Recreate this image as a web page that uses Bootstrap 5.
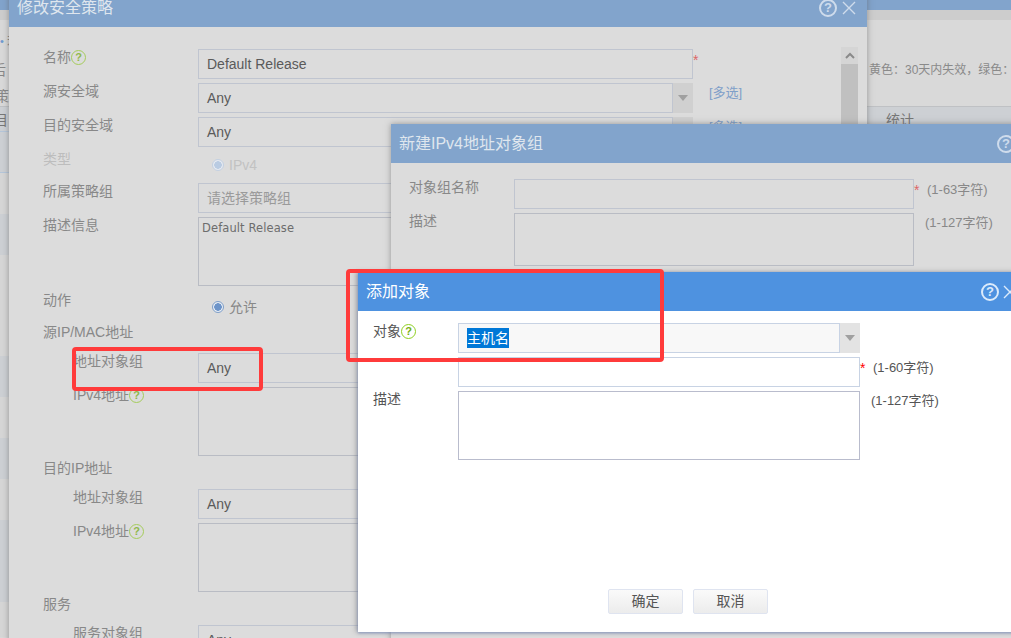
<!DOCTYPE html>
<html lang="zh-CN">
<head>
<meta charset="utf-8">
<title>添加对象</title>
<link href="https://cdn.jsdelivr.net/npm/bootstrap@5.3.0/dist/css/bootstrap.min.css" rel="stylesheet">
<style>
html,body{height:638px;overflow:hidden;margin:0;background:#d9d9d9}
body{font-family:"Liberation Sans","Noto Sans CJK SC",sans-serif;font-size:14px;line-height:16px;color:#888}
.desk{position:relative;width:1011px;height:638px;overflow:hidden}
/* page behind the dialogs */
.back-top{height:10px;background:#82a4cc}
.back-strip{height:10px;background:#cdcdcd}
.back-tools{height:86px;background:#d9d9d9;padding-top:13px}
.back-line{display:flex;height:16px;white-space:nowrap}
.back-line.l2{margin-top:13px}
.back-line.l3{margin-top:10px}
.frag-dot{width:7px;flex:none;color:#6f9ad0;font-size:11px}
.frag-b{width:877px;flex:none;margin-left:-8px}
.frag-c{margin-left:-5px}
.back-note{font-size:12px;color:#8a8a8a}
.back-head{display:flex;height:26px;background:#cdd0d4;border-top:1px solid #bfc1c4;border-bottom:1px solid #b5c6da;padding-top:5px;color:#777}
.frag-d{width:892px;flex:none;margin-left:-6px}
.row-a{height:41px;background:#cdd0d4}
.row-a1{border-bottom:1px solid #b5c6da}
.row-b{height:41px;background:#d6d6d6}
.row-tall-b{height:60px;background:#d6d6d6}
.row-tall-a{height:82px;background:#cdd0d4}
.row-last{height:35px;background:#d6d6d6;padding-top:30px;padding-left:633px}
.cell-rule{height:5px;border-left:1px solid #c8c8c8}
.w-74{width:74px}.w-11{width:11px}
/* windows */
.win{position:absolute;box-shadow:0 0 6px rgba(90,90,90,.55)}
.win-1{left:9px;top:-12px;width:858px;height:680px;background:#dcdcdc}
.win-2{left:391px;top:124px;width:700px;height:520px;background:#dcdcdc}
.win-3{left:358px;top:272px;width:700px;height:360px;background:#fff;box-shadow:0 1px 3px rgba(120,140,190,.8),-2px 0 5px rgba(90,90,90,.4)}
.win-head{height:39px;padding:0 8px;font-size:16px;background:#82a4cc;color:#dfe6ee}
.win-3 .win-head{background:#4e92e0;color:#fff}
.win-1 .win-body{padding:22px 0 0 34px}
.win-2 .win-body{padding:16px 0 0 18px}
.win-3 .win-body{padding:12px 0 0 15px}
.win-tools{position:absolute;top:0;height:39px}
.t-1{left:810px}.t-2{left:606px}.t-3{left:623px}
.ask{width:18px;height:18px;border-radius:50%;border:2px solid #cfdcec;color:#cfdcec;font-size:13px;font-weight:700;line-height:14px;text-align:center;flex:none}
.t-3 .ask{border-color:#dcebfb;color:#dcebfb}
.hint{display:inline-block;width:15px;height:15px;border-radius:50%;border:1.5px solid #a5cc5b;color:#8fb84a;font-size:11px;font-weight:700;line-height:12px;text-align:center;vertical-align:1px}
.win-3 .hint{border-color:#8fd01f;color:#74ae10}
/* form rows */
.line{display:flex;margin-bottom:4px}
.line.tight{margin-bottom:0}
.h-32{height:32px}.h-30{height:30px}
.pad-2{padding-top:2px}
.tag{width:155px;flex:none;white-space:nowrap}
.tag.dim{color:#bdbdbd}
.tag.sub{padding-left:30px}
.tag.nudge{padding-top:1px}
.tag-2{width:105px;flex:none}
.tag-3{width:85px;flex:none;color:#555}
.box.form-control{display:block;height:30px;width:495px;padding:6px 8px;border:1px solid #c0c5d0;border-radius:0;background:transparent;font-size:14px;line-height:16px;color:#5a5a5a}
.box.holder{color:#9a9a9a}
.area.form-control{display:block;height:69px;width:495px;min-height:0;margin-bottom:1px;padding:3px;border:1px solid #b9bcc4;border-radius:0;background:transparent;font-family:"DejaVu Sans",sans-serif;font-size:11.5px;line-height:14px;letter-spacing:.1px;color:#6d6d6d}
.picker{display:flex;width:495px;height:30px}
.picker .box{flex:1;width:auto}
.drop{width:20px;flex:none;background:#d0d0d0;display:flex;align-items:center;justify-content:center}
.drop i{display:block;width:0;height:0;border:5px solid transparent;border-top:6px solid #a0a0a0;border-bottom:0}
.more{margin-left:16px;padding-top:2px;font-size:13px;color:#7f9fc9;white-space:nowrap}
.star{color:#d66;width:6px;flex:none;font-size:14px;line-height:14px;padding-top:4px}
.limit{font-size:13px;white-space:nowrap;padding-top:3px;padding-left:7px}
.limit.wide{padding-left:11px;padding-top:2px}
.opt{height:30px;padding-left:14px;display:flex;align-items:center;gap:5px;padding-top:1px}
.dot{width:12px;height:12px;border-radius:50%;border:1px solid #7f9fc9;background:radial-gradient(circle,#6d94c9 0 3.5px,#e8edf4 4px);flex:none}
.opt.off{color:#c2c2c2;height:26px}
.opt.off .dot{border-color:#c3d0e2;background:radial-gradient(circle,#b9cbe2 0 3.5px,#e6eaf0 4px)}
.scroll-rail{position:absolute;left:832px;top:59px;width:17px;height:300px;background:#c0c0c0}
.scroll-up{height:17px;background:#d5d5d5;display:flex;align-items:center;justify-content:center}
/* top windows */
.win-2 .box.form-control,.win-2 .area.form-control{width:400px}
.win-2 .area.form-control{height:53px}
.win-3 .box.form-control{width:402px;border-color:#c8d3e4;background:#fff;color:#555}
.win-3 .area.form-control{width:402px;border-color:#b9bccd;background:#fff}
.win-3 .picker{width:402px}
.win-3 .picker .box.form-control{width:auto;background:#f8f8f8;padding:4px 8px}
.win-3 .drop{background:#e3e3e3}
.win-3 .star{color:#f00}
.win-3 .limit{color:#555}
.pick-text{background:#0078d7;color:#fff;display:inline-block;padding:2px 0;line-height:16px}
.foot{position:absolute;left:250px;top:317px;display:flex;gap:10px}
.foot .btn{width:75px;height:25px;padding:0;border:1px solid #dfe4f0;border-radius:2px;background:linear-gradient(#fafafa,#ececec);font-size:14px;line-height:23px;color:#555}
.mark-red{position:absolute;border:4px solid #ff3b3b;border-radius:4px;pointer-events:none}
.mark-a{left:72px;top:347px;width:191px;height:44px}
.mark-b{left:346px;top:269px;width:318px;height:93px}
</style>
</head>
<body>
<div class="desk">
  <div class="back-top"></div>
  <div class="back-strip"></div>
  <div class="back-tools">
    <div class="back-line"><span class="frag-dot">•</span><span>若</span></div>
    <div class="back-line l2"><span class="frag-b">后</span><span class="back-note">黄色：30天内失效，绿色：</span></div>
    <div class="back-line l3"><span class="frag-c">策</span></div>
  </div>
  <div class="back-head"><span class="frag-d">目</span><span>统计</span></div>
  <div class="row-a row-a1"></div>
  <div class="row-b"></div>
  <div class="row-a"></div>
  <div class="row-b"></div>
  <div class="row-tall-b"></div>
  <div class="row-a"></div>
  <div class="row-b"></div>
  <div class="row-a"></div>
  <div class="row-b"></div>
  <div class="row-tall-a"></div>
  <div class="row-last d-flex">
    <div class="cell-rule w-74"></div>
    <div class="cell-rule w-11"></div>
    <div class="cell-rule w-74"></div>
    <div class="cell-rule"></div>
  </div>

  <section class="win win-1">
    <div class="win-head d-flex align-items-center">修改安全策略</div>
    <div class="win-tools t-1 d-flex align-items-center gap-1">
      <div class="ask">?</div>
      <svg width="16" height="16" viewBox="0 0 16 16"><path d="M2 2 14 14M14 2 2 14" stroke="#cfdcec" stroke-width="1.4" fill="none"/></svg>
    </div>
    <div class="win-body">
      <div class="line"><div class="tag">名称<span class="hint">?</span></div><div class="box form-control">Default Release</div><div class="star">*</div></div>
      <div class="line"><div class="tag">源安全域</div><div class="picker"><div class="box form-control">Any</div><div class="drop"><i></i></div></div><div class="more">[多选]</div></div>
      <div class="line tight"><div class="tag">目的安全域</div><div class="picker"><div class="box form-control">Any</div><div class="drop"><i></i></div></div><div class="more">[多选]</div></div>
      <div class="line tight mt-1 h-32"><div class="tag dim">类型</div><div class="opt off"><span class="dot"></span>IPv4</div></div>
      <div class="line"><div class="tag">所属策略组</div><div class="box form-control holder">请选择策略组</div></div>
      <div class="line"><div class="tag">描述信息</div><div class="area form-control">Default Release</div></div>
      <div class="line tight h-32"><div class="tag nudge">动作</div><div class="opt"><span class="dot"></span>允许</div></div>
      <div class="line tight h-30"><div class="tag nudge">源IP/MAC地址</div></div>
      <div class="line"><div class="tag sub">地址对象组</div><div class="box form-control">Any</div></div>
      <div class="line tight"><div class="tag sub">IPv4地址<span class="hint">?</span></div><div class="area form-control"></div></div>
      <div class="line tight h-32 pad-2"><div class="tag nudge">目的IP地址</div></div>
      <div class="line"><div class="tag sub">地址对象组</div><div class="box form-control">Any</div></div>
      <div class="line tight"><div class="tag sub">IPv4地址<span class="hint">?</span></div><div class="area form-control"></div></div>
      <div class="line tight h-32 pad-2"><div class="tag nudge">服务</div></div>
      <div class="line"><div class="tag sub">服务对象组</div><div class="box form-control">Any</div></div>
    </div>
    <div class="scroll-rail">
      <div class="scroll-up"><svg width="10" height="7" viewBox="0 0 10 7"><path d="M1 6 5 2 9 6" stroke="#8a8a8a" stroke-width="2" fill="none"/></svg></div>
    </div>
  </section>

  <section class="win win-2">
    <div class="win-head d-flex align-items-center">新建IPv4地址对象组</div>
    <div class="win-tools t-2 d-flex align-items-center"><div class="ask">?</div></div>
    <div class="win-body">
      <div class="line"><div class="tag-2">对象组名称</div><div class="box form-control"></div><div class="star">*</div><div class="limit">(1-63字符)</div></div>
      <div class="line"><div class="tag-2">描述</div><div class="area form-control"></div><div class="limit wide">(1-127字符)</div></div>
    </div>
  </section>

  <section class="win win-3">
    <div class="win-head d-flex align-items-center">添加对象</div>
    <div class="win-tools t-3 d-flex align-items-center gap-1">
      <div class="ask">?</div>
      <svg width="14" height="14" viewBox="0 0 14 14"><path d="M1 1 13 13M13 1 1 13" stroke="#dcebfb" stroke-width="1.4" fill="none"/></svg>
    </div>
    <div class="win-body">
      <div class="line"><div class="tag-3">对象<span class="hint">?</span></div><div class="picker"><div class="box form-control"><span class="pick-text">主机名</span></div><div class="drop"><i></i></div></div></div>
      <div class="line"><div class="tag-3"></div><div class="box form-control"></div><div class="star">*</div><div class="limit">(1-60字符)</div></div>
      <div class="line"><div class="tag-3">描述</div><div class="area form-control"></div><div class="limit wide">(1-127字符)</div></div>
    </div>
    <div class="foot">
      <button type="button" class="btn">确定</button>
      <button type="button" class="btn">取消</button>
    </div>
  </section>

  <div class="mark-red mark-a"></div>
  <div class="mark-red mark-b"></div>
</div>
</body>
</html>
